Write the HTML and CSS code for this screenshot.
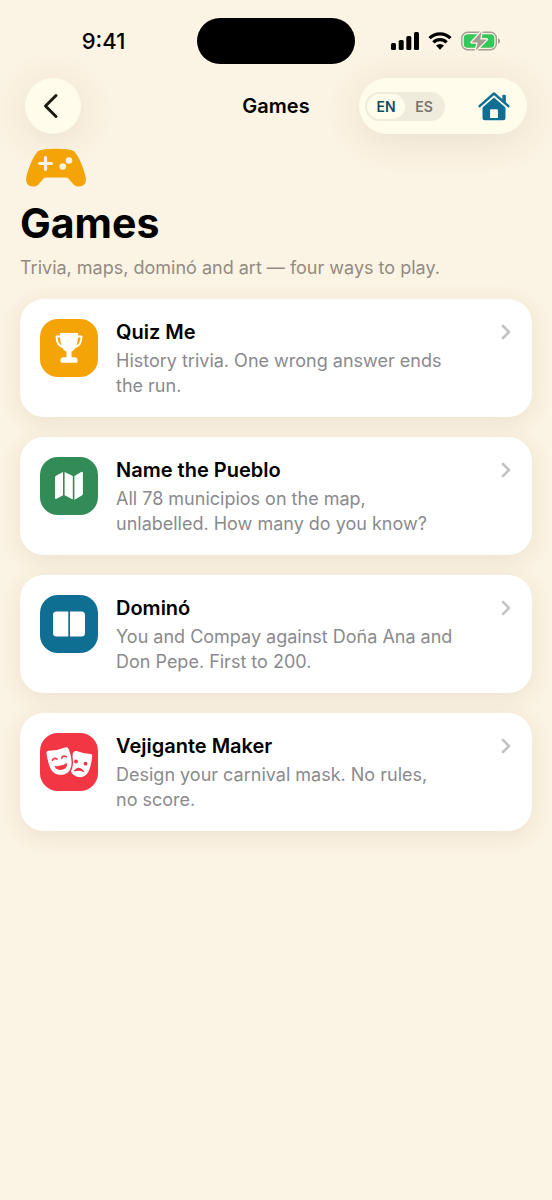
FILE: index.html
```html
<!DOCTYPE html>
<html lang="en">
<head>
<meta charset="utf-8">
<meta name="viewport" content="width=device-width, initial-scale=1">
<title>Games</title>
<link rel="stylesheet" href="styles.css">
</head>
<body>
<div class="status">
  <time class="clock">9:41</time>
  <div class="island"></div>
  <div class="indicators">
    <svg width="28" height="18" viewBox="0 0 28 18" aria-hidden="true"><rect x="0" y="11" width="5" height="7" rx="1.5"/><rect x="7.7" y="8" width="5" height="10" rx="1.5"/><rect x="15.3" y="4" width="5" height="14" rx="1.5"/><rect x="23" y="0" width="5" height="18" rx="1.5"/></svg>
    <svg width="24" height="18" viewBox="0 0 24 18" aria-hidden="true"><path d="M1.500 6.200a15 15 0 0 1 21 0M5.400 10.300a9.400 9.400 0 0 1 13.200 0" fill="none" stroke="#000" stroke-width="3.200"/><path d="M12 17.700 8 13.600a5.800 5.800 0 0 1 8 0Z"/></svg>
    <svg width="40" height="20" viewBox="0 0 40 20" aria-hidden="true"><rect x=".8" y="1.300" width="34.500" height="17.400" rx="5.800" fill="none" stroke="#a49d93" stroke-width="1.400"/><path d="M37 7.200c2.700.6 2.700 5 0 5.600Z" fill="#a49d93"/><rect x="2.800" y="3.300" width="30.500" height="13.400" rx="3.800" fill="#34c759"/><path d="M20.600.4 10.600 11.400h6.200l-2 8.200L25.800 8.400h-6.600Z" fill="#a49d93" stroke="#fbf3e3" stroke-width="2.600" stroke-linejoin="round" paint-order="stroke"/></svg>
  </div>
</div>
<header class="nav">
  <button class="back" type="button" aria-label="Back"><svg width="16" height="26" viewBox="0 0 16 26"><path d="M13 2.500 2.500 13 13 23.500" fill="none" stroke="#1a1a10" stroke-width="3" stroke-linecap="round" stroke-linejoin="round"/></svg></button>
  <div class="nav-title">Games</div>
  <div class="tools">
    <div class="langs">
      <button class="lang lang-on" type="button" aria-pressed="true">EN</button>
      <button class="lang" type="button" aria-pressed="false">ES</button>
    </div>
    <a class="home" href="#home" aria-label="Home"><svg width="32" height="30" viewBox="1 0 32 30"><path d="M2.600 15.100 17 2.500l14.400 12.600" fill="none" stroke="#0f6f92" stroke-width="2.500" stroke-linecap="round" stroke-linejoin="round"/><path d="M25.300 4.700q0-1 1-1h1.600q1 0 1 1v7.400l-3.600-3.200Z" fill="#0f6f92"/><path fill-rule="evenodd" d="M17 6.400 28.500 16.400V26.700q0 2.500-2.500 2.500h-18Q5.500 29.200 5.500 26.700V16.400ZM13.900 18.200q-.8 0-.8.8v8h7.800v-8q0-.8-.8-.8Z" fill="#0f6f92"/></svg></a>
  </div>
</header>
<main class="page">
  <svg class="gamepad" width="62" height="40" viewBox="0 0 62 40" aria-hidden="true"><path d="M13 3.200Q15 1.500 20 1.200Q31 .4 42 1.200Q47 1.500 49 3.200C54 8 59.500 22 60.800 30C61.500 35 58.500 38.500 54 38.500C50 38.500 48.500 36.500 46 33.500L43.300 30.400Q42.300 29.500 41 29.500H21Q19.700 29.500 18.700 30.400L16 33.500C13.500 36.500 12 38.500 8 38.500C3.500 38.500 .5 35 1.200 30C2.500 22 8 8 13 3.200Z" fill="#f4a406"/><path d="M20.500 9.500v12M14.500 15.500h12" stroke="#fcf4e4" stroke-width="3.200" stroke-linecap="round"/><circle cx="44" cy="12.500" r="3.300" fill="#fcf4e4"/><circle cx="37.800" cy="18.500" r="3.300" fill="#fcf4e4"/></svg>
  <h1 class="heading">Games</h1>
  <p class="lead">Trivia, maps, dominó and art — four ways to play.</p>
  <nav class="cards" aria-label="Games">
    <a class="card" href="#quiz">
      <span class="tile amber"><svg width="58" height="58" viewBox="0 0 58 58"><path d="M20.500 14H37.500Q38.300 14 38.200 15C37.800 24 36.500 30.500 31.500 32.800V38.300H34.500Q37.500 38.300 37.500 41V42.500Q37.500 43.800 36.200 43.800H21.800Q20.500 43.800 20.500 42.500V41Q20.500 38.300 23.500 38.300H26.500V32.800C21.500 30.500 20.200 24 19.800 15Q19.700 14 20.500 14Z" fill="#fff"/><path d="M21 17.500H16.500C16.500 23.500 18.500 27.500 24 28.500M37 17.500H41.500C41.500 23.500 39.500 27.500 34 28.500" fill="none" stroke="#fff" stroke-width="1.900" stroke-linejoin="round"/></svg></span>
      <span class="copy"><span class="name">Quiz Me</span><span class="desc">History trivia. One wrong answer ends the run.</span></span>
      <svg class="chevron" width="10" height="16" viewBox="0 0 10 16"><path d="m2 2 6 6-6 6"/></svg>
    </a>
    <a class="card" href="#pueblo">
      <span class="tile green"><svg width="58" height="58" viewBox="0 0 58 58"><path d="M15 20.700q0-1.200 1-1.900l7-3.900V38.200l-6.500 3.600q-1.500.7-1.500-1ZM24.600 14.900l8.200 4V42.600l-8.200-4.300ZM34.400 19l6.800-4q1.700-.8 1.700 1V36.500q0 1.200-1 1.900l-7.500 4.400Z" fill="#fff"/></svg></span>
      <span class="copy"><span class="name">Name the Pueblo</span><span class="desc">All 78 municipios on the map, unlabelled. How many do you know?</span></span>
      <svg class="chevron" width="10" height="16" viewBox="0 0 10 16"><path d="m2 2 6 6-6 6"/></svg>
    </a>
    <a class="card" href="#domino">
      <span class="tile blue"><svg width="58" height="58" viewBox="0 0 58 58"><path d="M16.500 16.500H28.300V41.500H16.500Q13 41.500 13 38V20Q13 16.500 16.500 16.500ZM30 16.500H41.500Q45 16.500 45 20V38Q45 41.500 41.500 41.500H30Z" fill="#fff"/></svg></span>
      <span class="copy"><span class="name">Dominó</span><span class="desc">You and Compay against Doña Ana and Don Pepe. First to 200.</span></span>
      <svg class="chevron" width="10" height="16" viewBox="0 0 10 16"><path d="m2 2 6 6-6 6"/></svg>
    </a>
    <a class="card" href="#vejigante">
      <span class="tile red"><svg width="58" height="58" viewBox="0 0 58 58"><path d="M33 19.500Q34.500 17.500 36.500 18Q43 20.500 50.500 21Q52.500 21.300 52.200 23.500Q51 33 49 37.500C46.500 43.500 41 45.500 36.500 43.500C33 42 30.500 39.500 30 36Z" fill="#fff"/><path d="M8.300 17.800Q17 17.800 25 14.400Q27.800 13.400 28.800 16.200Q32 25 31.500 31C31 38 27 41.200 22.500 41.700C16 42.500 11.500 39 9.500 33Q7 26 6.500 20Q6.300 17.900 8.300 17.800Z" fill="#fff" stroke="#f23644" stroke-width="3" paint-order="stroke"/><path d="M14.500 33Q21.500 34 26.800 30C27.800 34 25 36.300 22 36.800C18.500 37.400 15.500 36 14.500 33Z" fill="#f23644"/><path d="M12.500 27.200q1.500-2.800 4.500-1.200M21.700 25q1.500-2.800 4.500-1.200" fill="none" stroke="#f23644" stroke-width="1.700" stroke-linecap="round"/><path d="M34.500 37.700Q39 32.500 43.700 38.500Q39.500 36.200 34.500 37.700Z" fill="#f23644" stroke="#f23644" stroke-width="1.200" stroke-linejoin="round"/><circle cx="36" cy="28.500" r="1.900" fill="#f23644"/><circle cx="45.500" cy="30.700" r="1.900" fill="#f23644"/></svg></span>
      <span class="copy"><span class="name">Vejigante Maker</span><span class="desc">Design your carnival mask. No rules, no&nbsp;score.</span></span>
      <svg class="chevron" width="10" height="16" viewBox="0 0 10 16"><path d="m2 2 6 6-6 6"/></svg>
    </a>
  </nav>
</main>
</body>
</html>
```
FILE: styles.css
```css
* { box-sizing: border-box; }
body {
  margin: 0;
  min-height: 100vh;
  background: #fbf3e3;
  color: #000;
  font-family: Inter, "Liberation Sans", sans-serif;
}
svg { display: block; flex: none; }
a { color: inherit; text-decoration: none; }
button { border: 0; padding: 0; font: inherit; cursor: pointer; }

.status {
  display: grid;
  grid-template-columns: 1fr 158px 1fr;
  align-items: center;
  padding-top: 18px;
}
.clock { padding-left: 10px; text-align: center; font-size: 22px; line-height: 26px; font-weight: 500; }
.island { height: 46px; border-radius: 23px; background: #000; }
.indicators { display: flex; align-items: center; justify-content: center; gap: 9px; padding-right: 15px; }

.nav {
  display: grid;
  grid-template-columns: 1fr auto 1fr;
  align-items: center;
  padding: 14px 25px 0;
}
.back, .tools {
  height: 56px;
  border-radius: 28px;
  background: #fffcec;
  box-shadow: 0 6px 36px rgba(120, 90, 60, 0.13);
}
.back { display: flex; align-items: center; justify-content: center; width: 56px; padding-right: 4px; }
.nav-title { font-size: 20px; line-height: 26px; font-weight: 600; }
.tools {
  justify-self: end;
  display: flex;
  align-items: center;
  justify-content: space-between;
  width: 168px;
  padding: 0 17px 0 6px;
}
.langs { display: flex; padding: 2px; border-radius: 15px; background: #efecde; }
.lang {
  width: 38px;
  height: 25px;
  border-radius: 13px;
  background: transparent;
  color: #77756c;
  font-size: 14px;
  font-weight: 600;
}
.lang-on { background: #fffcec; color: #174a5e; }

.page { padding: 14px 20px 40px; }
.gamepad { margin-left: 5px; }
.heading { margin: 10px 0 0; font-size: 41px; line-height: 50px; font-weight: 700; }
.lead { margin: 7px 0 0; color: #938b82; font-size: 18px; line-height: 26px; }

.cards { display: grid; gap: 20px; margin-top: 18px; }
.card {
  display: flex;
  align-items: flex-start;
  gap: 18px;
  padding: 20px 21px 19px 20px;
  border-radius: 24px;
  background: #fff;
  box-shadow: 0 5px 22px rgba(110, 75, 40, 0.1);
}
.tile { flex: none; border-radius: 18px; }
.amber { background: #f4a406; }
.green { background: #318c58; }
.blue { background: #0f6f92; }
.red { background: #f23644; }
.copy { flex: 1; min-width: 0; padding-right: 24px; }
.name, .desc { display: block; }
.name { font-size: 20px; line-height: 26px; font-weight: 600; }
.desc { margin-top: 3px; color: #8a8a8e; font-size: 18px; line-height: 25px; }
.chevron { margin-top: 5px; }
.chevron path { fill: none; stroke: #c4c4c6; stroke-width: 2.6px; stroke-linecap: round; stroke-linejoin: round; }
```
